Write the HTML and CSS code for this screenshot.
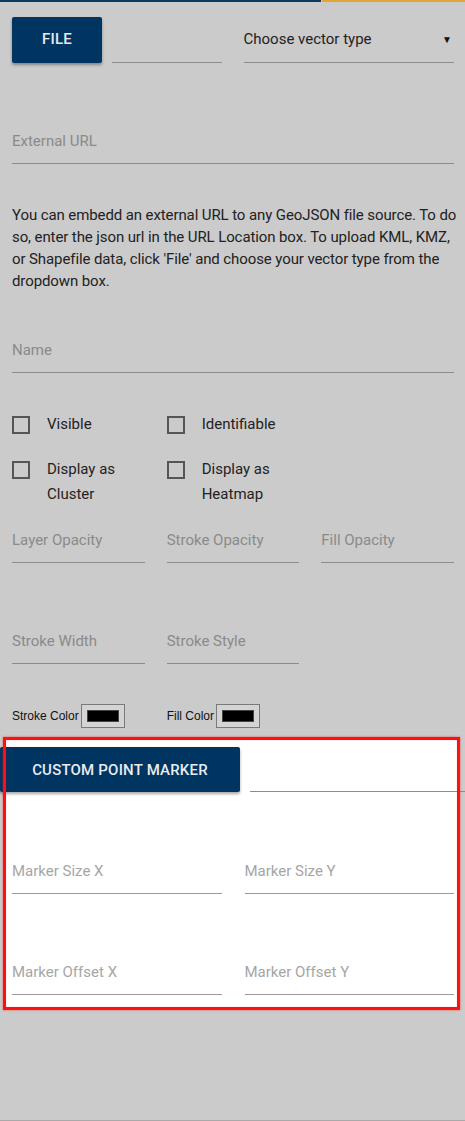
FILE: index.html
```html
<!DOCTYPE html>
<html lang="en">
<head>
<meta charset="utf-8">
<title>Vector layer</title>
<link rel="stylesheet" href="styles.css">
</head>
<body>
<div class="topbar"><span class="bar-navy"></span><span class="bar-gold"></span></div>
<main class="panel">
  <div class="row-top">
    <div class="file-group">
      <button class="btn btn-file" type="button">FILE</button>
      <input class="field field-file" type="text" aria-label="File">
    </div>
    <div class="select"><span>Choose vector type</span><span class="caret">▼</span></div>
  </div>

  <input class="field field-url" type="text" placeholder="External URL">

  <p class="help">You can embedd an external URL to any GeoJSON file source. To do so, enter the json url in the URL Location box. To upload KML, KMZ, or Shapefile data, click 'File' and choose your vector type from the dropdown box.</p>

  <input class="field field-name" type="text" placeholder="Name">

  <div class="checks">
    <label class="check"><span class="box"></span><span class="check-label">Visible</span></label>
    <label class="check"><span class="box"></span><span class="check-label">Identifiable</span></label>
    <label class="check"><span class="box"></span><span class="check-label">Display as Cluster</span></label>
    <label class="check"><span class="box"></span><span class="check-label">Display as Heatmap</span></label>
  </div>

  <div class="grid3 opacity-row">
    <input class="field" type="text" placeholder="Layer Opacity">
    <input class="field" type="text" placeholder="Stroke Opacity">
    <input class="field" type="text" placeholder="Fill Opacity">
  </div>

  <div class="grid3 stroke-row">
    <input class="field" type="text" placeholder="Stroke Width">
    <input class="field" type="text" placeholder="Stroke Style">
  </div>

  <div class="grid3 color-row">
    <div class="color-item"><span class="color-label">Stroke Color</span><span class="swatch"><span class="swatch-fill"></span></span></div>
    <div class="color-item"><span class="color-label">Fill Color</span><span class="swatch"><span class="swatch-fill"></span></span></div>
  </div>

  <section class="marker">
    <div class="marker-top">
      <button class="btn btn-marker" type="button">CUSTOM POINT MARKER</button>
      <span class="marker-line"></span>
    </div>
    <div class="grid2 marker-size">
      <input class="field field-light" type="text" placeholder="Marker Size X">
      <input class="field field-light" type="text" placeholder="Marker Size Y">
    </div>
    <div class="grid2 marker-offset">
      <input class="field field-light" type="text" placeholder="Marker Offset X">
      <input class="field field-light" type="text" placeholder="Marker Offset Y">
    </div>
  </section>
</main>
</body>
</html>
```

FILE: styles.css
```css
html, body {
  margin: 0;
  padding: 0;
}

body {
  background: #cbcbcb;
  font-family: Roboto, "Liberation Sans", sans-serif;
  color: #222;
  min-height: 100vh;
  box-sizing: border-box;
  border-bottom: 1px solid #a9a9a9;
}

.topbar {
  display: flex;
  height: 2px;
}

.bar-navy {
  width: 321px;
  background: #0b3a63;
}

.bar-gold {
  flex: 1;
  background: #e3a534;
  margin-left: 1px;
}

.panel {
  padding: 0 11px 0 12px;
}

.btn {
  border: none;
  border-radius: 2px;
  background: #003461;
  color: #e9ecef;
  font-family: Roboto, sans-serif;
  font-size: 15px;
  font-weight: 500;
  letter-spacing: 0.2px;
  box-shadow: 0 2px 3px rgba(0, 0, 0, 0.35);
  padding: 0;
}

.field {
  display: block;
  width: 100%;
  min-width: 0;
  box-sizing: border-box;
  height: 33px;
  padding: 0 0 12px 0;
  margin: 0;
  border: none;
  border-bottom: 1px solid #8c8c8c;
  background: transparent;
  font-family: Roboto, sans-serif;
  font-size: 15px;
  line-height: 20px;
  color: #222;
  outline: none;
}

.field::placeholder {
  color: #8a8a8a;
  opacity: 1;
}

.field-light {
  border-bottom-color: #9a9a9a;
}

.field-light::placeholder {
  color: #a6a6a6;
}

/* top row */
.row-top {
  display: grid;
  grid-template-columns: minmax(0, 1fr) minmax(0, 1fr);
  column-gap: 23px;
  align-items: end;
  margin-top: 15px;
}

.file-group {
  display: flex;
  align-items: flex-end;
  min-width: 0;
}

.btn-file {
  width: 90px;
  height: 46px;
  flex: none;
  padding-bottom: 2px;
}

.field-file {
  flex: 1 1 0;
  height: 46px;
  margin-left: 10px;
  width: auto;
}

.select {
  display: flex;
  align-items: center;
  justify-content: space-between;
  height: 46px;
  box-sizing: border-box;
  border-bottom: 1px solid #8c8c8c;
  font-size: 15px;
  color: #222;
  padding: 0 2px 1px 0;
  margin-left: -1px;
  white-space: nowrap;
}

.caret {
  font-size: 10px;
  color: #111;
}

.field-url {
  margin-top: 68px;
}

.help {
  margin: 40px -3px 0 0;
  font-size: 15px;
  line-height: 22px;
  letter-spacing: -0.1px;
  color: #222;
}

.field-name {
  margin-top: 48px;
}

/* checkboxes */
.checks {
  display: grid;
  grid-template-columns: repeat(3, 1fr);
  column-gap: 22px;
  row-gap: 20px;
  margin-top: 39px;
}

.check {
  display: flex;
  align-items: flex-start;
  font-size: 15px;
  line-height: 25px;
  color: #222;
}

.check:nth-child(odd) {
  grid-column: 1;
}

.box {
  flex: none;
  width: 18px;
  height: 18px;
  box-sizing: border-box;
  border: 2px solid #555;
  margin-top: 3.5px;
  margin-right: 17px;
}

/* grids */
.grid3 {
  display: grid;
  grid-template-columns: repeat(3, 1fr);
  column-gap: 22px;
}

.grid2 {
  display: grid;
  grid-template-columns: 1fr 1fr;
  column-gap: 23px;
}

.opacity-row {
  margin-top: 23px;
}

.stroke-row {
  margin-top: 68px;
}

.color-row {
  margin-top: 40px;
}

.color-item {
  display: flex;
  align-items: center;
  height: 23px;
}

.color-label {
  font-family: "Liberation Sans", Arial, sans-serif;
  font-size: 12px;
  color: #111;
  margin-right: 2px;
}

.swatch {
  display: block;
  width: 44px;
  height: 24px;
  box-sizing: border-box;
  border: 1px solid #7a7a7a;
  background: #d4d4d4;
  padding: 5px 5px;
}

.swatch-fill {
  display: block;
  height: 100%;
  background: #000;
  border: 1px solid #444;
  box-sizing: border-box;
}

/* custom marker section */
.marker {
  position: relative;
  background: #fff;
  margin: 10px -6px 0 -9px;
  padding: 8px 6px 15px 9px;
}

.marker::after {
  content: "";
  position: absolute;
  inset: 0;
  border: 3px solid #ff1010;
  box-shadow: 0 0 2px rgba(255, 0, 0, 0.6), inset 0 0 1px rgba(255, 0, 0, 0.5);
  pointer-events: none;
}

.marker-top {
  display: flex;
  align-items: flex-end;
  margin-left: -12px;
  margin-right: -11px;
}

.btn-marker {
  width: 240px;
  height: 45px;
  flex: none;
}

.marker-line {
  flex: 1;
  margin-left: 10px;
  height: 46px;
  border-bottom: 1px solid #8c8c8c;
}

.marker-size {
  margin-top: 69px;
}

.marker-offset {
  margin-top: 68px;
}
```
